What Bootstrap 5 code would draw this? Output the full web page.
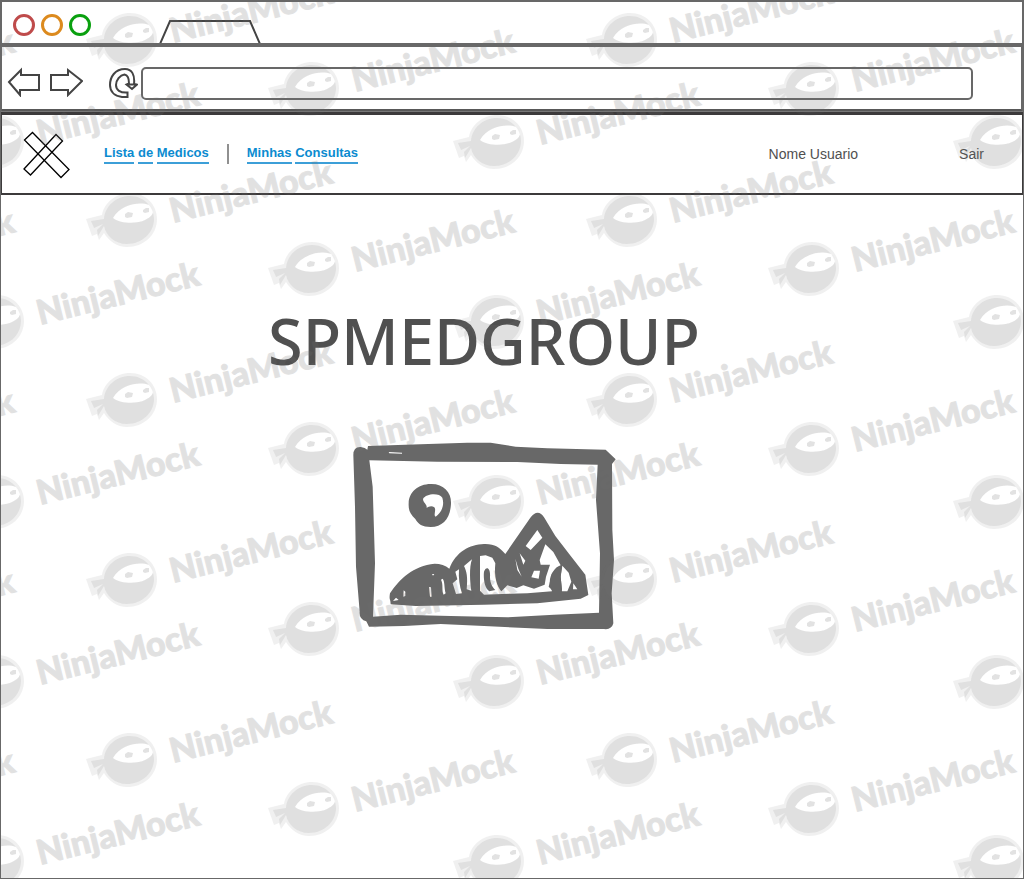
<!DOCTYPE html>
<html lang="pt">
<head>
<meta charset="utf-8">
<meta name="viewport" content="width=device-width, initial-scale=1">
<title>SPMEDGROUP</title>
<link href="https://cdn.jsdelivr.net/npm/bootstrap@5.3.0/dist/css/bootstrap.min.css" rel="stylesheet">
<style>
  body { font-family: "Liberation Sans", sans-serif; color: #505050; background: #fff; }
  svg { display: block; flex: none; }
  .browser { border: 1px solid #686868; border-top-width: 2px; overflow: hidden; }
  .tabstrip { height: 45px; padding-left: 11px; border-bottom: 4px solid #686868; border-right: 1px solid #686868; border-left: 1px solid #686868; }
  .dots { gap: 6px; padding-top: 12px; }
  .dot { width: 22px; height: 22px; border: 3px solid; border-radius: 50%; background: none; padding: 0; }
  .dot-close { border-color: #bf4b4b; }
  .dot-min { border-color: #dc8a1e; }
  .dot-max { border-color: #0aa00f; }
  .tab-shape { margin-left: 67px; }
  .toolbar { height: 65px; padding: 20px 48px 0 5px; border: solid #686868; border-width: 0 2px 3px 1px; border-bottom-color: #585858; }
  .tool { border: 0; background: none; padding: 0; }
  .tool-reload { margin-left: 25px; margin-right: 3px; }
  .address { height: 33px; border: 2px solid #686868; border-radius: 5px; background: #fff; padding: 0 8px; min-width: 0; }
  .site-nav { height: 83px; margin: 0 -1px; padding: 0 38px 0 21px; border: 2px solid #3c3a3b; border-top: 3px solid #3c3a3b; box-shadow: 0 -1px #777; }
  .logo { margin-top: 4px; }
  .nav-links { margin-left: 33px; font-size: 13px; line-height: 18px; font-weight: 700; }
  .nav-links a { color: #0b8bd0; text-decoration: none; }
  .nav-links a span { display: inline-block; border-bottom: 2px solid #3c9fd8; }
  .rule { width: 2px; height: 20px; background: #909090; margin: 0 18px; }
  .account { font-size: 14px; line-height: 18px; gap: 101px; }
  .account a { color: inherit; text-decoration: none; }
  .hero { padding: 102px 56px 0 0; }
  .hero h1 { font-family: "Noto Sans", sans-serif; font-size: 63px; line-height: 88px; margin: 0; color: #505050; font-weight: 500; }
  .hero svg { margin-top: 57px; }
  .watermark { inset: 0; width: 100%; height: 100%; pointer-events: none; overflow: hidden; }
  .watermark text { font-family: "Lato", "Open Sans", sans-serif; font-weight: 900; font-size: 34px; fill: #707070; stroke: #707070; stroke-width: 1px; opacity: .2; }
</style>
</head>
<body>
<div class="browser position-relative min-vh-100 d-flex flex-column">
  <header>
    <div class="tabstrip d-flex align-items-end">
      <div class="dots d-flex align-self-start">
        <button class="dot dot-close" aria-label="Fechar"></button>
        <button class="dot dot-min" aria-label="Minimizar"></button>
        <button class="dot dot-max" aria-label="Maximizar"></button>
      </div>
      <svg class="tab-shape" width="104" height="24" fill="none" stroke="#444" stroke-width="2"><path d="M2 25 12 2H92L102 25"/></svg>
    </div>
    <div class="toolbar d-flex align-items-start">
      <button class="tool" aria-label="Voltar"><svg width="34" height="30" fill="none" stroke="#444" stroke-width="2"><path d="M2 15 14 3V8H32V23H13V28Z"/></svg></button>
      <button class="tool ms-2" aria-label="Avançar"><svg width="34" height="30" fill="none" stroke="#444" stroke-width="2"><path d="M2 8H19V3L33 14 19 28V23H2Z"/></svg></button>
      <button class="tool tool-reload" aria-label="Recarregar"><svg width="30" height="32" fill="none" stroke="#444" stroke-width="2"><path d="M19.500 30H14C6 29 2 24 2 18C2 10 7 2 17 2C24 2 27 8 26 17L29 17.500 24 22 18.500 17.500 21 16.500C21 11 20 8 16.500 7.500C12 8 8 13 8 18C8 23 12 26 19.500 25.500ZM19 17.500H29"/></svg></button>
      <input class="address flex-grow-1" type="text" aria-label="Endereço">
    </div>
  </header>
  <nav class="site-nav d-flex align-items-center">
    <svg class="logo" width="48" height="50" fill="none" stroke="#000" stroke-width="1.300"><path d="M1.500 9 9.500 1.500 46 38.500 38 46.500Z"/><path d="M1 38 33 3.500 39.500 10 7.500 44Z"/></svg>
    <div class="nav-links d-flex align-items-center">
      <a href="#"><span>Lista</span> <span>de</span> <span>Medicos</span></a>
      <div class="rule"></div>
      <a href="#"><span>Minhas</span> <span>Consultas</span></a>
    </div>
    <div class="account d-flex ms-auto"><span>Nome Usuario</span><a href="#">Sair</a></div>
  </nav>
  <main class="hero d-flex flex-column align-items-center">
    <h1>SPMEDGROUP</h1>
    <svg width="264" height="188" viewBox="34 36 792 564" fill="#686868" fill-rule="evenodd" role="img" aria-label="Imagem">
      <path d="M38 75Q38 50 60 51Q74 53 80 59L82 48L240 43L380 38L450 38L525 50L620 55L795 59L825 88L814 102L815 300L820 390L813 490L818 580Q813 600 790 597L620 597L430 588L300 582L190 588L85 590L77 574Q55 568 57 545L46 410L43 230ZM86 91L96 170L103 400L97 560L180 554L330 558L500 562L640 554L775 548L778 370L766 210L771 104L660 102L530 96L290 95ZM144 66L184 68 184 71 146 70Z"/>
      <path d="M270 162C310 161 333 188 331 222C329 264 307 291 270 291C245 291 232 282 224 267C208 251 203 242 204 219C205 187 232 162 270 162ZM247 207C256 190 296 188 305 203C313 229 300 249 285 260C277 255 288 240 281 232C272 226 264 230 258 234C260 221 248 221 247 207Z"/>
      <path d="M148 490C177 447 217 407 282 401Q308 401 326 416C345 366 387 343 430 342C462 341 476 351 494 372L569 263Q592 234 611 263L644 318L685 371L734 434L743 495L720 506L590 520L430 524L225 528L150 523L149 513Q145 505 148 490Z"/>
      <g fill="#fff">
        <path d="M157 513 174 510 166 503ZM188 500 194 498 194 485 189 481ZM265 471 268 500 273 500 271 472ZM274 432 281 432 277 437ZM301 449C309 465 302 480 309 494L315 490C310 472 313 455 306 446Z"/>
        <path d="M344 425 355 418C353 445 357 470 364 490L346 492 336 460 350 448ZM370 408 394 388C385 410 388 460 392 482L378 478C382 440 378 425 370 408Z"/>
        <path d="M418 378 435 376 455 383 464 400C460 440 468 470 484 486L484 492 430 494 418 482Z"/>
        <path d="M480 486 500 466 528 474 548 466 580 476 612 464 616 440 628 404 600 404 597 390 614 343 638 366 660 406C640 412 624 440 628 466L634 484 560 490 484 492Z"/>
        <path d="M590 300 605 323 570 360 555 348ZM537 370 554 392 548 404ZM524 386 533 416 543 440 530 420ZM580 422 598 422 594 446 572 442ZM665 407 684 428 692 455 680 484 664 484 660 440ZM698 460 710 478 697 478Z"/>
      </g>
      <path d="M430 425C436 408 450 412 448 440C448 460 456 472 464 480L446 484C430 475 428 440 430 425ZM634 430 664 404 660 440 664 480 640 486 624 470Z"/>
    </svg>
  </main>
  <svg class="watermark position-absolute" id="watermark" aria-hidden="true">
    <defs>
      <g id="ninja" fill="#707070" fill-rule="evenodd">
        <path fill-opacity=".1" d="M-43-1-27-5C-25-17-13-27 1-27C17-27 28-15 28-1C28 15 15 27-2 27C-12 27-20 21-25 13L-30 20-32 14-37 16Z M-16-2C-8 4 8 4 16 0C22-3 25-6 24-12C20-19-6-19-16-2Z"/>
        <path fill-opacity=".12" d="M-25-1C-24-14-13-24 1-24C15-24 25-13 25-1C25 13 13 24-2 24C-14 24-23 16-25 6L-31 16-32 10-26 4-35 8-38 1Z M-16-2C-8 4 8 4 16 0C22-3 25-6 24-12C20-19-6-19-16-2Z"/>
        <path fill-opacity=".2" d="M-4-6-1-8 4-7 3-3-2-2-4-3ZM14-10 17-12 20-12 20-8 16-7 14-8Z"/>
      </g>
    </defs>
  </svg>
</div>
<script src="https://cdn.jsdelivr.net/npm/bootstrap@5.3.0/dist/js/bootstrap.bundle.min.js"></script>
<script>
  // Repeats the diagonal watermark over the whole frame: three marks per 500 x 180 tile
  const sheet = document.getElementById('watermark');
  const NS = 'http://www.w3.org/2000/svg';
  const marks = [[128, 38], [310, 87], [495, 140]];
  function stamp(x, y) {
    const g = document.createElementNS(NS, 'g');
    g.setAttribute('transform', `translate(${x} ${y})`);
    g.innerHTML = '<use href="#ninja"/><text transform="translate(44 3) rotate(-14)">NinjaMock</text>';
    sheet.append(g);
  }
  const { width, height } = sheet.getBoundingClientRect();
  for (let ty = 0; ty < height + 180; ty += 180) {
    for (let tx = -500; tx < width; tx += 500) {
      for (const [mx, my] of marks) {
        const x = tx + mx, y = ty + my;
        if (x > -205 && x < width + 40 && y < height + 40) stamp(x, y);
      }
    }
  }
</script>
</body>
</html>
